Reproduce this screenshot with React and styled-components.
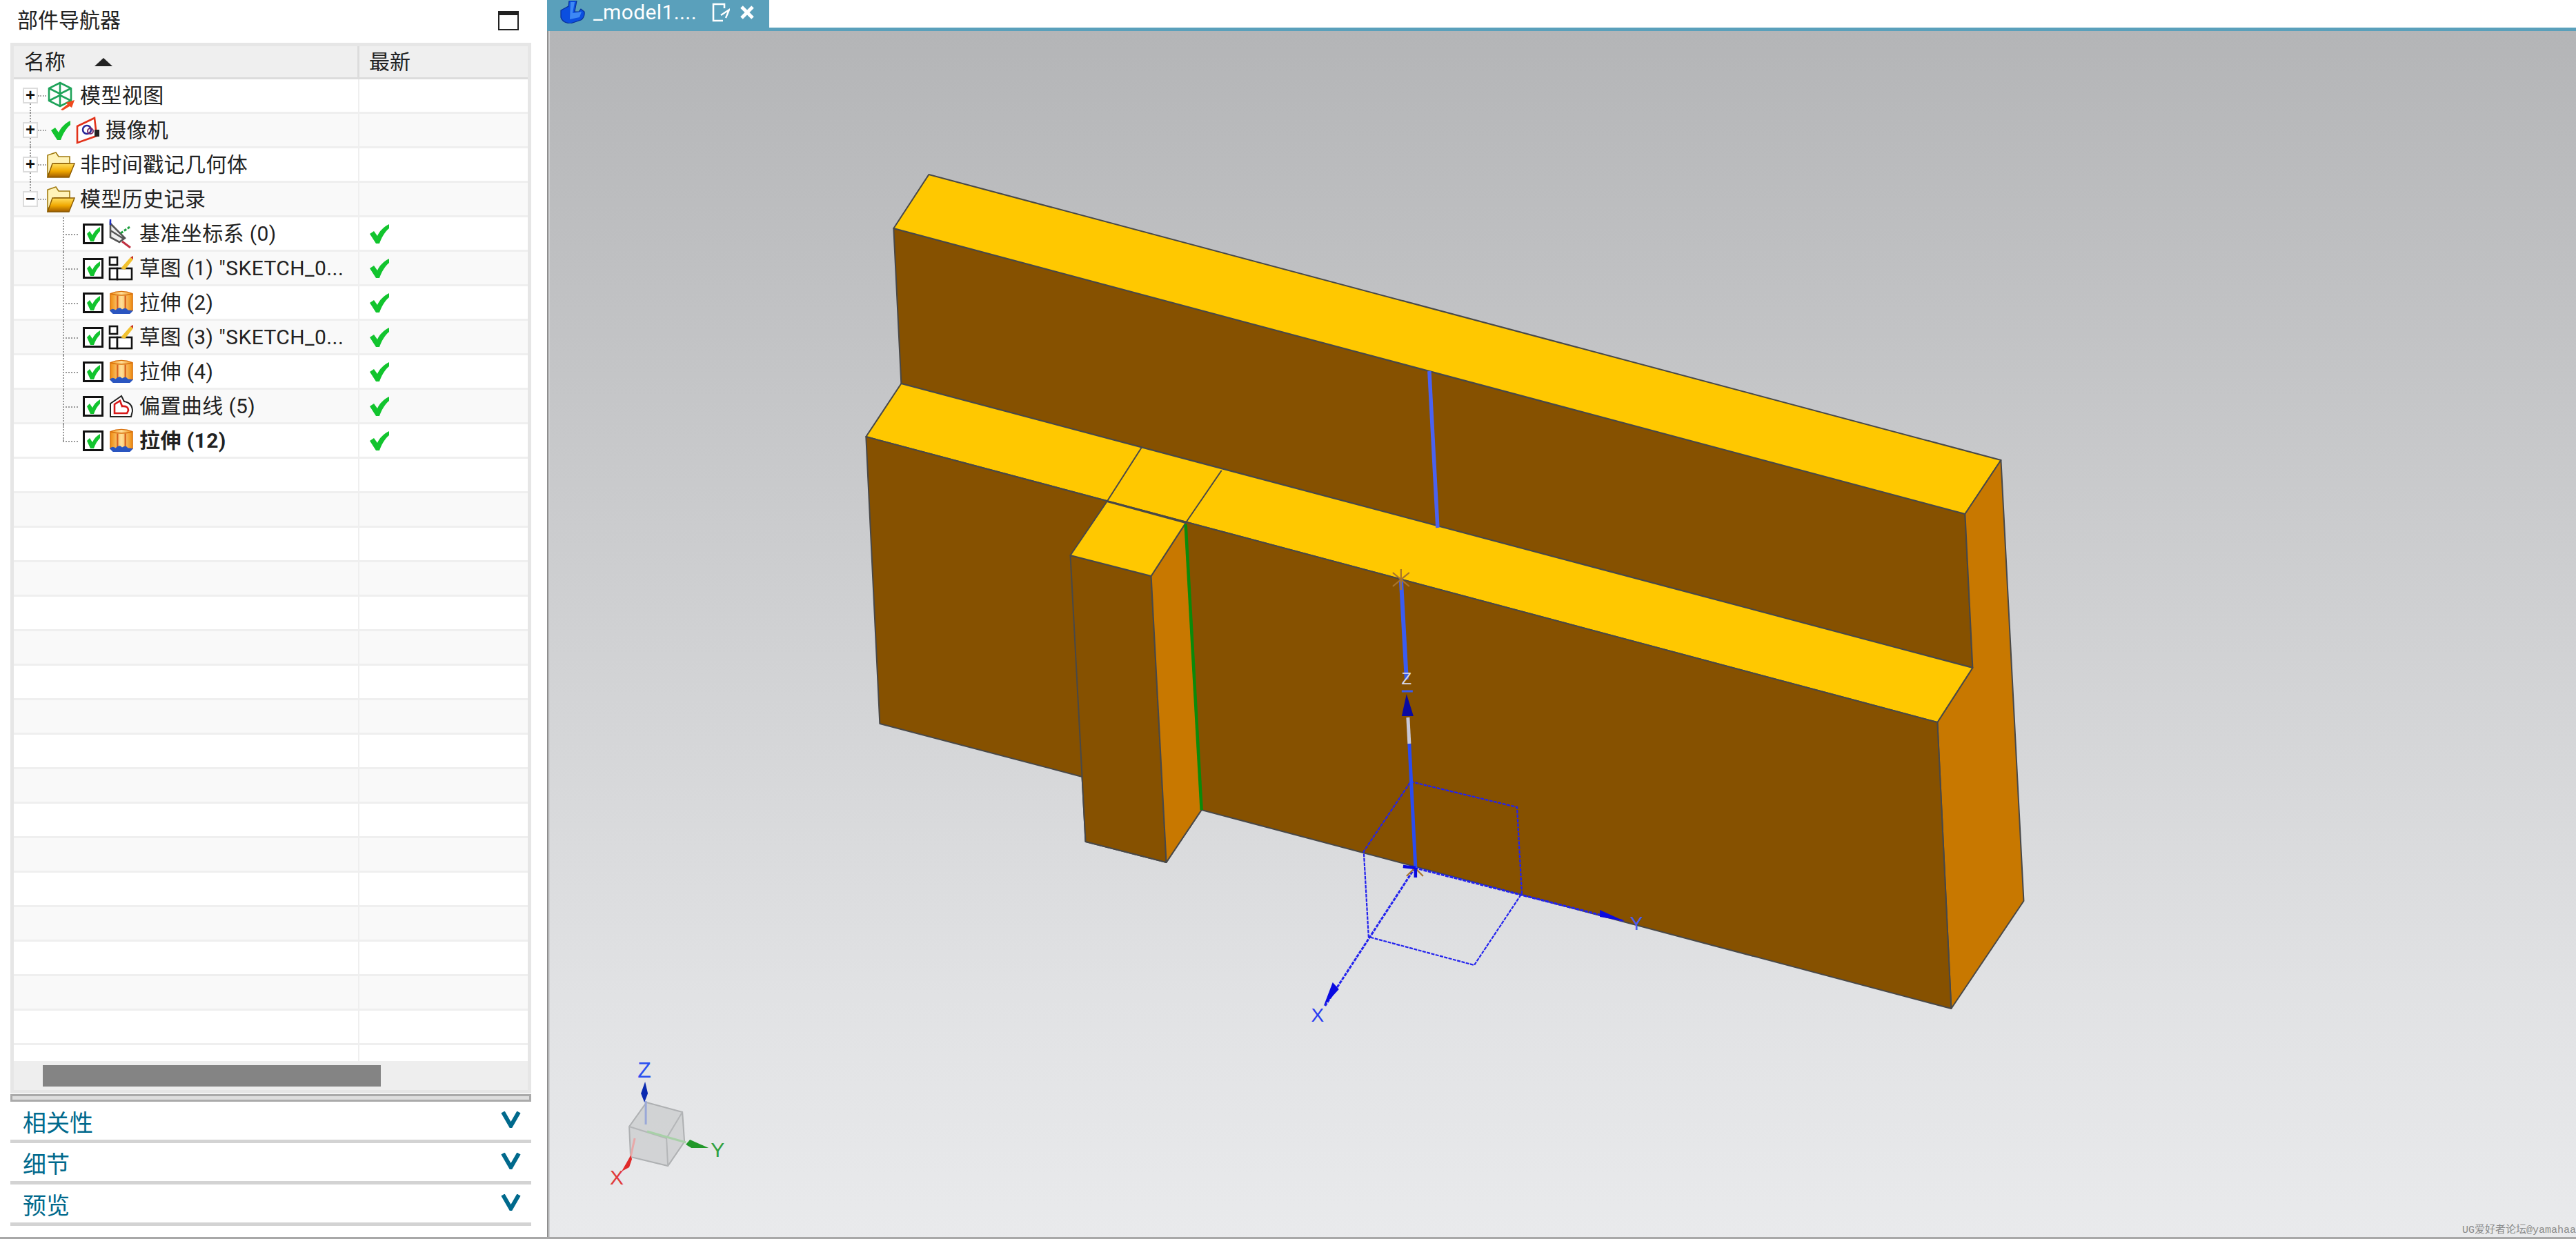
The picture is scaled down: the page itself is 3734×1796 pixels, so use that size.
import React from "react"
import styled, { createGlobalStyle } from "styled-components"

const uiFont = `Roboto, "Noto Sans CJK SC", sans-serif`

const GlobalStyle = createGlobalStyle`
	html, body {
		margin: 0;
		padding: 0;
		background: #fff;
		overflow: hidden;
	}
	* {
		box-sizing: border-box;
	}
`

const historyRows = [
	{ label: "基准坐标系 (0)", icon: "datum" },
	{ label: `草图 (1) "SKETCH_0...`, icon: "sketch" },
	{ label: "拉伸 (2)", icon: "extrude" },
	{ label: `草图 (3) "SKETCH_0...`, icon: "sketch" },
	{ label: "拉伸 (4)", icon: "extrude" },
	{ label: "偏置曲线 (5)", icon: "offset" },
	{ label: "拉伸 (12)", icon: "extrude", bold: true, last: true },
]

const TOTAL_ROWS = 28

const GreenCheck = ({ size = 30 }) => (
	<svg width={size} height={size} viewBox="0 0 30 30">
		<path d="M1 15 L7 11 L12 18 C15 11 21 5 29 1 L29 7 C22 13 18 21 15 29 L10 29 Z" fill="#12c42e" />
	</svg>
)

const CheckBox = () => (
	<svg width="30" height="30" viewBox="0 0 30 30">
		<rect x="1.5" y="1.5" width="27" height="27" fill="#fff" stroke="#111" strokeWidth="3" />
		<path d="M6 15 L10 11 L14 17 C16 12 20 8 25 5 L25 11 C21 15 18 20 16 26 L11 26 Z" fill="#12c42e" />
	</svg>
)

const ModelViewIcon = () => (
	<svg width="42" height="42" viewBox="0 0 42 42">
		<g fill="none" stroke="#1fa35a" strokeWidth="2.6">
			<path d="M20 2 L36 10 L36 28 L20 36 L4 28 L4 10 Z" />
			<path d="M4 10 L20 18 L36 10 M20 18 L20 36 M4 28 L20 20 L36 28 M20 2 L20 20" />
		</g>
		<path d="M21 41 L31 33 L28 31 L41 27 L37 38 L34 36 L24 42 Z" fill="#ef4a1e" />
	</svg>
)

const CameraIcon = () => (
	<svg width="36" height="40" viewBox="0 0 36 40">
		<path d="M2 14 L27 2 L30 28 L2 38 Z" fill="#fff" stroke="#e2321a" strokeWidth="2.6" />
		<circle cx="16" cy="19" r="6" fill="none" stroke="#2a2a9a" strokeWidth="2.5" />
		<circle cx="21" cy="21" r="4" fill="none" stroke="#7a2a6a" strokeWidth="2" />
		<rect x="27" y="19" width="7" height="10" fill="#222" />
	</svg>
)

const FolderIcon = () => (
	<svg width="42" height="40" viewBox="0 0 42 40">
		<defs>
			<linearGradient id="folderFront" x1="0" y1="0" x2="0" y2="1">
				<stop offset="0" stopColor="#ffe060" />
				<stop offset="0.55" stopColor="#f0a800" />
				<stop offset="1" stopColor="#a05c00" />
			</linearGradient>
		</defs>
		<path d="M2 36 L2 6 L14 2 L18 8 L34 8 L34 18 L12 18 Z" fill="#fff3b8" stroke="#a07a10" strokeWidth="1.6" />
		<path d="M9 18 L41 18 L33 38 L2 38 Z" fill="url(#folderFront)" stroke="#8a5a00" strokeWidth="1.4" />
	</svg>
)

const DatumIcon = () => (
	<svg width="38" height="42" viewBox="0 0 38 42">
		<path d="M3 6 L3 26 L16 33 L24 27 Z M3 16 L22 28" fill="#eee" stroke="#555" strokeWidth="2.6" />
		<path d="M3 0 L3 8" stroke="#2030c0" strokeWidth="2.5" />
		<path d="M18 20 L31 11" stroke="#20a040" strokeWidth="3" strokeDasharray="4 2" />
		<path d="M20 32 L32 41" stroke="#c03040" strokeWidth="3" />
	</svg>
)

const SketchIcon = () => (
	<svg width="38" height="36" viewBox="0 0 38 36">
		<g fill="#fff" stroke="#111" strokeWidth="2.6">
			<rect x="2" y="2" width="11" height="11" />
			<rect x="2" y="18" width="11" height="16" />
			<rect x="13" y="18" width="21" height="16" />
		</g>
		<path d="M18 18 L32 2 L36 5 L24 20 Z" fill="#f2c230" />
		<path d="M32 2 L36 5 L36 0 Z" fill="#c83020" />
	</svg>
)

const ExtrudeIcon = () => (
	<svg width="36" height="36" viewBox="0 0 38 36">
		<defs>
			<linearGradient id="extrudeBody" x1="0" y1="0" x2="1" y2="0">
				<stop offset="0" stopColor="#f08c10" />
				<stop offset="0.5" stopColor="#ffe09a" />
				<stop offset="1" stopColor="#ee8a10" />
			</linearGradient>
		</defs>
		<path d="M2 4 Q19 -3 36 4 L36 30 L2 30 Z" fill="url(#extrudeBody)" stroke="#d8700c" strokeWidth="1.4" />
		<path d="M2 4 Q19 9 36 4" fill="none" stroke="#d8700c" strokeWidth="1.6" />
		<path d="M13 7 L13 28 M25 7 L25 28" stroke="#d8601c" strokeWidth="2.4" />
		<path d="M1 30 Q5 25 10 29 Q16 23 20 28 Q26 24 29 29 L37 30 L32 35 L6 35 Z" fill="#2a55c0" />
	</svg>
)

const OffsetIcon = () => (
	<svg width="36" height="34" viewBox="0 0 36 34">
		<path d="M2 13 L18 2 L22 10 Q34 12 34 24 L32 32 L2 32 Z" fill="#fff" stroke="#222" strokeWidth="2" />
		<path d="M8 14 L16 9 L19 17 Q28 16 28 23 L26 27 L8 27 Z" fill="#fff" stroke="#d81818" strokeWidth="2.6" />
	</svg>
)

const featureIcons = {
	datum: DatumIcon,
	sketch: SketchIcon,
	extrude: ExtrudeIcon,
	offset: OffsetIcon,
}

const Chevron = () => (
	<svg width="29" height="24" viewBox="0 0 29 24">
		<path d="M3 1 L14.5 21 L26 1" fill="none" stroke="#00698c" strokeWidth="6" />
	</svg>
)

const TabFileIcon = () => (
	<svg width="36" height="33" viewBox="0 0 36 33">
		<path d="M1 14 L12 8 L13 0 L24 0 L21 16 L27 16 L30 12 L35 16 Q36 24 30 28 L15 33 Q3 32 1 24 Z" fill="#0b4fe0" stroke="#08309a" strokeWidth="1.2" />
		<path d="M15 2 L21 2 L18 18 L31 16 L28 24 L14 27 Z" fill="#3d88f4" />
	</svg>
)

const TabNoteIcon = () => (
	<svg width="26" height="28" viewBox="0 0 26 28">
		<path d="M16 26 L2 26 L2 2 L18 2 L18 8" fill="none" stroke="#fff" strokeWidth="2.6" />
		<path d="M13 18 L25 10 L20 22" fill="none" stroke="#fff" strokeWidth="2.4" />
	</svg>
)

const TabCloseIcon = () => (
	<svg width="22" height="20" viewBox="0 0 22 20">
		<path d="M3 2 L19 18 M19 2 L3 18" stroke="#fff" strokeWidth="5" />
	</svg>
)

const edge = { stroke: "#484848", strokeWidth: 2, strokeLinejoin: "round" }

function AxisLabel({ x, y, fill, size, children }) {
	return (
		<text x={x} y={y} fill={fill} fontSize={size} fontFamily="'Liberation Sans', sans-serif" textAnchor="middle">
			{children}
		</text>
	)
}

const ModelDrawing = () => (
	<svg width="100%" height="100%" viewBox="797 45 2937 1748" preserveAspectRatio="none" style={{ display: "block" }}>
		{/* part faces */}
		<polygon points="1297,331 2849,745 2860,968 1308,556" fill="#865100" {...edge} />
		<polygon points="1348,253 2901,667 2849,745 1297,331" fill="#ffc800" {...edge} />
		<polygon points="2901,667 2934,1306 2829,1462 2809,1047 2860,968 2849,745" fill="#c87800" {...edge} />
		<polygon points="1308,556 2860,968 2809,1047 1257,633" fill="#ffc800" {...edge} />
		<polygon points="1257,633 2809,1047 2829,1462 1743,1174 1692,1250 1575,1220 1570,1126 1277,1049" fill="#865100" {...edge} />
		<polygon points="1553,805 1670,835 1692,1250 1575,1220" fill="#865100" {...edge} />
		<polygon points="1670,835 1720,758 1743,1174 1692,1250" fill="#c87800" {...edge} />
		<polygon points="1553,805 1606,727 1720,758 1670,835" fill="#ffc800" {...edge} />
		<path d="M1606,727 L1656,649 M1720,758 L1772,682" {...edge} fill="none" />
		<line x1="1720" y1="760" x2="1743" y2="1174" stroke="#0a8a0a" strokeWidth="4.5" />
		<line x1="2073" y1="538" x2="2085" y2="765" stroke="#4a62f0" strokeWidth="5.5" />

		{/* datum csys */}
		<g fill="none" stroke="#2222ee" strokeWidth="2.2" strokeDasharray="5 1.5">
			<path d="M2046,1133 L2200,1170 L2207,1295 L2138,1399 L1985,1358 L1978,1234 Z" />
			<path d="M2052,1258 L2355,1335" strokeWidth="3" />
			<path d="M2052,1258 L1922,1458" strokeWidth="3" />
		</g>
		<line x1="2032" y1="840" x2="2040" y2="985" stroke="#3a5cf0" strokeWidth="6" />
		<line x1="2042" y1="1040" x2="2044" y2="1078" stroke="#c8c8d8" strokeWidth="5" />
		<line x1="2044" y1="1078" x2="2053" y2="1258" stroke="#2a4cf0" strokeWidth="5" />
		<polygon points="2040,1006 2033,1038 2050,1038" fill="#0a0aa0" />
		<polygon points="2320,1319 2355,1335 2320,1329" fill="#0a0ae0" />
		<polygon points="1933,1424 1942,1434 1920,1458" fill="#0a0ae0" />
		<path d="M2032,825 L2032,855 M2020,830 L2044,850 M2044,830 L2020,850 M2040,1270 L2052,1258 L2064,1270" stroke="#a8742c" strokeWidth="2.2" fill="none" />
		<path d="M2035,1256 L2053,1258 M2053,1258 L2053,1272" stroke="#0a0ae0" strokeWidth="4.5" fill="none" />
		<path d="M2033,1002 L2049,1002" stroke="#3a5cf0" strokeWidth="3" />
		<AxisLabel x="2040" y="992" fill="#d8d8e8" size="24">Z</AxisLabel>
		<AxisLabel x="2373" y="1348" fill="#4a5cf0" size="28">Y</AxisLabel>
		<AxisLabel x="1911" y="1481" fill="#2a3cf0" size="28">X</AxisLabel>

		{/* orientation triad */}
		<polygon points="939,1598 991,1612 994,1655 970,1690 916,1677 914,1633" fill="#c9cacc" fillOpacity="0.7" stroke="#aeb0b2" strokeWidth="2" />
		<path d="M914,1633 L968,1650 L991,1612 M968,1650 L970,1690" fill="none" stroke="#b4b6b8" strokeWidth="2" />
		<line x1="938" y1="1630" x2="938" y2="1596" stroke="#9aa8d8" strokeWidth="3" />
		<line x1="922" y1="1650" x2="916" y2="1677" stroke="#e8a8a8" strokeWidth="3" />
		<line x1="940" y1="1640" x2="996" y2="1656" stroke="#a8d0a8" strokeWidth="3" />
		<polygon points="937,1568 931,1585 936,1598 941,1585" fill="#0a2ab0" />
		<polygon points="1029,1664 1002,1652 996,1659 1004,1664" fill="#22982a" />
		<polygon points="916,1675 903,1698 914,1692 918,1680" fill="#e02a2a" />
		<AxisLabel x="936" y="1562" fill="#2a50f0" size="32">Z</AxisLabel>
		<AxisLabel x="1042" y="1677" fill="#30a040" size="30">Y</AxisLabel>
		<AxisLabel x="896" y="1717" fill="#e03a3a" size="30">X</AxisLabel>
	</svg>
)

function TopRow({ odd, first, last, expanded, label, children }) {
	return (
		<Row $odd={odd}>
			<NameCell>
				<Expander $first={first} $last={last}>{expanded ? "−" : "+"}</Expander>
				<HDots />
				{children}
				<Label>{label}</Label>
			</NameCell>
			<LatestCell />
		</Row>
	)
}

function App() {
	const fillerCount = TOTAL_ROWS - 4 - historyRows.length

	return (
		<>
			<GlobalStyle />
			<Page>
				<Workspace>
					<Panel>
						<PanelHeader>
							<PanelTitle>部件导航器</PanelTitle>
							<MaximizeBox />
						</PanelHeader>
						<TreeFrame>
							<HeaderRow>
								<HeaderCell>
									名称
									<SortArrow />
								</HeaderCell>
								<HeaderCell $second>最新</HeaderCell>
							</HeaderRow>
							<TopRow first label="模型视图">
								<ModelViewIcon />
							</TopRow>
							<TopRow odd label="摄像机">
								<CameraCheck>
									<GreenCheck size={30} />
								</CameraCheck>
								<CameraIcon />
							</TopRow>
							<TopRow label="非时间戳记几何体">
								<FolderIcon />
							</TopRow>
							<TopRow odd last expanded label="模型历史记录">
								<FolderIcon />
							</TopRow>
							{historyRows.map((row, i) => {
								const Icon = featureIcons[row.icon]
								return (
									<Row key={i} $odd={i % 2 === 1}>
										<NameCell>
											<TreeGutter $last={row.last} />
											<CheckBox />
											<FeatureIcon>
												<Icon />
											</FeatureIcon>
											<Label $bold={row.bold}>{row.label}</Label>
										</NameCell>
										<LatestCell>
											<GreenCheck />
										</LatestCell>
									</Row>
								)
							})}
							{Array.from({ length: fillerCount }).map((_, i) => (
								<Row key={i} $odd={i % 2 === 1}>
									<NameCell />
									<LatestCell />
								</Row>
							))}
							<TailRow>
								<NameCell />
								<LatestCell />
							</TailRow>
							<ScrollTrack>
								<ScrollThumb />
							</ScrollTrack>
						</TreeFrame>
						<Splitter />
						{["相关性", "细节", "预览"].map(title => (
							<Section key={title}>
								<SectionTitle>{title}</SectionTitle>
								<Chevron />
							</Section>
						))}
					</Panel>
					<Main>
						<TabStrip>
							<Tab>
								<TabFileIcon />
								<TabTitle>_model1....</TabTitle>
								<TabNoteIcon />
								<TabCloseIcon />
							</Tab>
						</TabStrip>
						<Viewport>
							<ModelDrawing />
							<Watermark>UG爱好者论坛@yamahaa</Watermark>
						</Viewport>
					</Main>
				</Workspace>
				<BottomBar />
			</Page>
		</>
	)
}

export default App

const Page = styled.div`
	width: 3734px;
	height: 1796px;
	display: flex;
	flex-direction: column;
	font-family: ${uiFont};
	color: #222;
	background: #fff;
`
const Workspace = styled.div`
	flex: 1;
	min-height: 0;
	display: flex;
`
const BottomBar = styled.div`
	height: 3px;
	background: #a8a8a8;
`
const Panel = styled.div`
	width: 793px;
	flex: none;
	display: flex;
	flex-direction: column;
	background: #fff;
`
const PanelHeader = styled.div`
	height: 62px;
	padding: 0 41px 2px 25px;
	display: flex;
	align-items: center;
	justify-content: space-between;
`
const PanelTitle = styled.div`
	font-size: 30px;
	line-height: 1;
`
const MaximizeBox = styled.div`
	width: 30px;
	height: 28px;
	border: 2.5px solid #222;
	border-top-width: 6px;
`
const TreeFrame = styled.div`
	width: 755px;
	margin-left: 15px;
	border: 5px solid #e6e6e6;
	display: flex;
	flex-direction: column;
`
const HeaderRow = styled.div`
	height: 48px;
	display: flex;
	background: #efefef;
	border-bottom: 3px solid #dcdcdc;
`
const HeaderCell = styled.div`
	font-size: 30px;
	line-height: 1;
	display: flex;
	align-items: center;
	${p => (p.$second ? "flex: 1; padding-left: 14px;" : "width: 501px; padding-left: 15px; border-right: 3px solid #dcdcdc;")}
`
const SortArrow = styled.span`
	margin-left: 42px;
	border-left: 13px solid transparent;
	border-right: 13px solid transparent;
	border-bottom: 12px solid #222;
`
const Row = styled.div`
	height: 50px;
	flex: none;
	display: flex;
	background: ${p => (p.$odd ? "#f9f9f9" : "#fff")};
	border-bottom: 3px solid #efefef;
`
const TailRow = styled.div`
	height: 23px;
	flex: none;
	display: flex;
	background: #fff;
`
const NameCell = styled.div`
	width: 501px;
	flex: none;
	height: 100%;
	display: flex;
	align-items: center;
	border-right: 2px solid #efefef;
`
const LatestCell = styled.div`
	flex: 1;
	padding-left: 14px;
	display: flex;
	align-items: center;
`
const Expander = styled.div`
	position: relative;
	width: 22px;
	height: 23px;
	margin-left: 13px;
	flex: none;
	border: 2px solid #dcdcdc;
	background: #fff;
	font: 700 24px/17px "Liberation Sans", sans-serif;
	text-align: center;
	color: #111;
	&::before,
	&::after {
		content: "";
		position: absolute;
		left: 8px;
		height: 15px;
		border-left: 2px dotted #999;
	}
	&::before {
		top: -17px;
		display: ${p => (p.$first ? "none" : "block")};
	}
	&::after {
		bottom: -17px;
		display: ${p => (p.$last ? "none" : "block")};
	}
`
const HDots = styled.div`
	width: 12px;
	flex: none;
	border-top: 2px dotted #aaa;
`
const CameraCheck = styled.div`
	display: flex;
	margin: 0 7px 0 6px;
`
const TreeGutter = styled.div`
	position: relative;
	width: 100px;
	height: 100%;
	flex: none;
	&::before {
		content: "";
		position: absolute;
		left: 71px;
		top: 0;
		height: ${p => (p.$last ? "50%" : "calc(100% + 3px)")};
		border-left: 2px dotted #999;
	}
	&::after {
		content: "";
		position: absolute;
		left: 71px;
		top: 50%;
		width: 22px;
		border-top: 2px dotted #999;
	}
`
const FeatureIcon = styled.div`
	width: 38px;
	margin-left: 7px;
	flex: none;
	display: flex;
	align-items: center;
	justify-content: center;
`
const Label = styled.div`
	margin-left: 7px;
	font-size: 30px;
	line-height: 1;
	letter-spacing: 0.4px;
	white-space: nowrap;
	color: #222;
	font-weight: ${p => (p.$bold ? 700 : 400)};
`
const ScrollTrack = styled.div`
	height: 42px;
	padding: 6px 0 5px 42px;
	background: #eee;
`
const ScrollThumb = styled.div`
	width: 490px;
	height: 100%;
	background: #848484;
`
const Splitter = styled.div`
	width: 755px;
	height: 11px;
	margin: 1px 0 0 15px;
	flex: none;
	background: #dedede;
	border: 3px solid #aaa;
`
const Section = styled.div`
	width: 755px;
	height: 60px;
	margin-left: 15px;
	padding: 0 15px 3px 18px;
	flex: none;
	display: flex;
	align-items: center;
	justify-content: space-between;
	border-bottom: 5px solid #d3d3d3;
`
const SectionTitle = styled.div`
	margin-top: 10px;
	font-size: 34px;
	line-height: 1;
	color: #00698c;
`
const Main = styled.div`
	flex: 1;
	min-width: 0;
	display: flex;
	flex-direction: column;
`
const TabStrip = styled.div`
	height: 45px;
	flex: none;
	background: #fff;
	border-bottom: 5px solid #5aa0bb;
`
const Tab = styled.div`
	width: 322px;
	height: 45px;
	padding: 0 17px 10px 19px;
	display: flex;
	align-items: center;
	background: #5aa0bb;
	& > svg:nth-child(3) {
		margin-left: 22px;
	}
	& > svg:nth-child(4) {
		margin-left: 14px;
	}
`
const TabTitle = styled.div`
	margin-left: 12px;
	font-size: 30px;
	line-height: 1;
	letter-spacing: 0.4px;
	color: #fff;
	white-space: nowrap;
`
const Viewport = styled.div`
	position: relative;
	flex: 1;
	min-height: 0;
	background: linear-gradient(#b4b5b7 0%, #d0d1d3 50%, #e1e2e4 80%, #e9eaec 100%);
	border-left: 2px solid #8e8e8e;
	box-shadow: inset 2px 0 0 #cfd0d2;
`
const Watermark = styled.div`
	position: absolute;
	right: 0;
	bottom: 2px;
	font: 15px/1 "Liberation Mono", "Noto Sans CJK SC", monospace;
	color: #8a8a8a;
	white-space: nowrap;
`
